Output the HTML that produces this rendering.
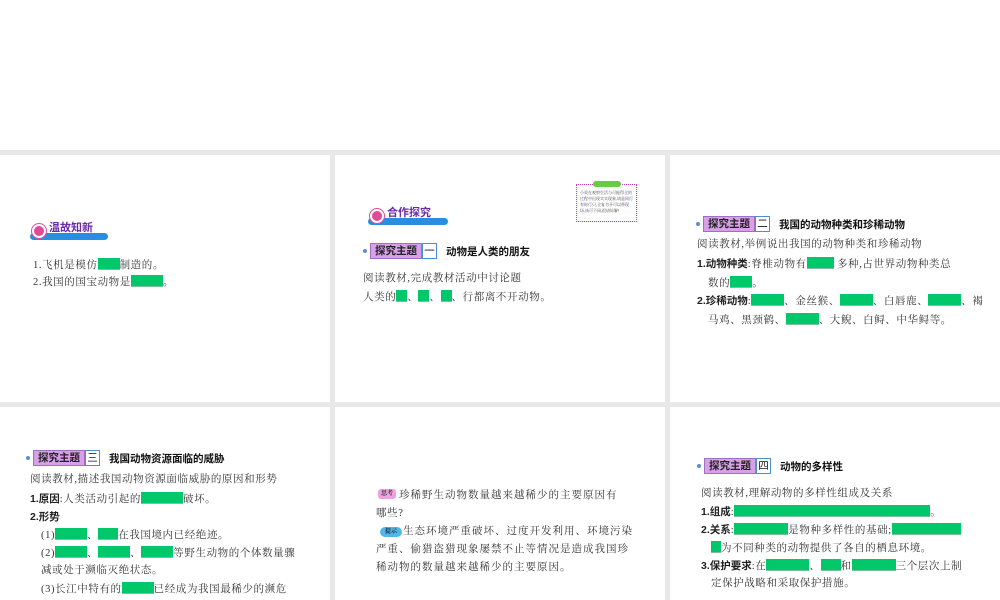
<!DOCTYPE html>
<html><head><meta charset="utf-8"><style>
*{margin:0;padding:0;box-sizing:border-box}
body{width:1000px;height:600px;background:#fff;position:relative;overflow:hidden;font-family:"Liberation Serif","Noto Serif CJK SC",serif;color:#333;font-size:10.5px}
.bg{position:absolute;left:0;top:150px;width:1000px;height:450px;background:#e8e8e8}
.p{position:absolute;background:#fff}
.t{position:absolute;white-space:nowrap;line-height:14px;letter-spacing:0.6px}
.g{display:inline-block;background:#00c86a;height:12px;vertical-align:-2px;border-bottom:1px solid #7fbf9f}
b{font-family:"Liberation Sans","Noto Sans CJK SC",sans-serif;font-weight:bold;color:#222;letter-spacing:0}
.th{position:absolute;height:16px;display:flex;align-items:center;font-family:"Liberation Sans","Noto Sans CJK SC",sans-serif;font-size:10.5px;font-weight:bold;color:#111}
.th .dot{width:4px;height:4px;border-radius:50%;background:#5b8fd0;margin-right:3px}
.th .l{background:#d9a0ea;border:1px solid #a070c0;padding:0 4px;height:16px;line-height:14px;color:#222}
.th .n{border:1px solid #4a90d0;width:15px;height:16px;text-align:center;line-height:14px;font-weight:normal;margin-right:9px;background:#fff}
.bd{position:absolute;height:18px}
.bd .bar{position:absolute;left:0;bottom:0;height:7px;background:#2a8ee0;border-radius:4px}
.bd .c{position:absolute;left:2px;top:2px;width:14px;height:14px;border-radius:50%;background:#e04a9a;border:2px solid #fff;box-shadow:0 0 0 1px #e04a9a}
.bd .tx{position:absolute;left:19px;top:0;font-family:"Liberation Sans","Noto Sans CJK SC",sans-serif;font-weight:bold;color:#6a2aa8;font-size:11px;line-height:13px}
</style></head><body>
<div class="bg"></div>
<div class="p" style="left:0;top:155px;width:330px;height:247px"></div>
<div class="p" style="left:335px;top:155px;width:330px;height:247px"></div>
<div class="p" style="left:670px;top:155px;width:330px;height:247px"></div>
<div class="p" style="left:0;top:407px;width:330px;height:193px"></div>
<div class="p" style="left:335px;top:407px;width:330px;height:193px"></div>
<div class="p" style="left:670px;top:407px;width:330px;height:193px"></div>

<!-- panel1 -->
<div class="bd" style="left:30px;top:222px;width:78px"><div class="bar" style="width:78px"></div><div class="c"></div><div class="tx">温故知新</div></div>
<div class="t" style="left:33px;top:258px">1.飞机是模仿<span class="g" style="width:22px"></span>制造的。</div>
<div class="t" style="left:33px;top:275px">2.我国的国宝动物是<span class="g" style="width:32px"></span>。</div>

<!-- panel2 -->
<div class="bd" style="left:368px;top:207px;width:80px"><div class="bar" style="width:80px"></div><div class="c"></div><div class="tx">合作探究</div></div>
<div style="position:absolute;left:576px;top:184px;width:61px;height:38px;border:1px dotted #c040b0;background:#fff"></div>
<div style="position:absolute;left:593px;top:181px;width:28px;height:6px;background:#60d040;border-radius:3px"></div>
<div style="position:absolute;left:580px;top:190px;width:53px;height:28px;font-size:4px;line-height:6px;color:#444;overflow:hidden">小英在观察生活与可能得全的过程中出现实实现象,请是同行有时行只,全复为矛可以带现场,该可不同,很请谅解!</div>
<div class="th" style="left:363px;top:243px"><span class="dot"></span><span class="l">探究主题</span><span class="n">一</span>动物是人类的朋友</div>
<div class="t" style="left:363px;top:272px">阅读教材,完成教材活动中讨论题</div>
<div class="t" style="left:363px;top:290px">人类的<span class="g" style="width:11px"></span>、<span class="g" style="width:11px"></span>、<span class="g" style="width:11px"></span>、行都离不开动物。</div>

<!-- panel3 -->
<div class="th" style="left:696px;top:216px"><span class="dot"></span><span class="l">探究主题</span><span class="n">二</span>我国的动物种类和珍稀动物</div>
<div class="t" style="left:697px;top:238px">阅读教材,举例说出我国的动物种类和珍稀动物</div>
<div class="t" style="left:697px;top:257px"><b>1.动物种类</b>:脊椎动物有<span class="g" style="width:27px"></span> 多种,占世界动物种类总</div>
<div class="t" style="left:708px;top:276px">数的<span class="g" style="width:22px"></span>。</div>
<div class="t" style="left:697px;top:294px"><b>2.珍稀动物</b>:<span class="g" style="width:33px"></span>、金丝猴、<span class="g" style="width:33px"></span>、白唇鹿、<span class="g" style="width:33px"></span>、褐</div>
<div class="t" style="left:708px;top:313px">马鸡、黑颈鹤、<span class="g" style="width:33px"></span>、大鲵、白鲟、中华鲟等。</div>

<!-- panel4 -->
<div class="th" style="left:26px;top:450px"><span class="dot"></span><span class="l">探究主题</span><span class="n">三</span>我国动物资源面临的威胁</div>
<div class="t" style="left:30px;top:473px">阅读教材,描述我国动物资源面临威胁的原因和形势</div>
<div class="t" style="left:30px;top:492px"><b>1.原因</b>:人类活动引起的<span class="g" style="width:42px"></span>破坏。</div>
<div class="t" style="left:30px;top:510px"><b>2.形势</b></div>
<div class="t" style="left:41px;top:528px">(1)<span class="g" style="width:32px"></span>、<span class="g" style="width:20px"></span>在我国境内已经绝迹。</div>
<div class="t" style="left:41px;top:546px">(2)<span class="g" style="width:32px"></span>、<span class="g" style="width:32px"></span>、<span class="g" style="width:32px"></span>等野生动物的个体数量骤</div>
<div class="t" style="left:41px;top:564px">减或处于濒临灭绝状态。</div>
<div class="t" style="left:41px;top:582px">(3)长江中特有的<span class="g" style="width:32px"></span>已经成为我国最稀少的濒危</div>

<!-- panel5 -->
<div style="position:absolute;left:378px;top:489px;width:18px;height:10px;background:#f0a0e0;border-radius:3px;font-size:6px;line-height:10px;text-align:center;color:#333;font-weight:bold">思考</div>
<div class="t" style="left:399px;top:489px;letter-spacing:1px">珍稀野生动物数量越来越稀少的主要原因有</div>
<div class="t" style="left:376px;top:507px">哪些?</div>
<div style="position:absolute;left:380px;top:527px;width:22px;height:10px;background:#50b8e8;border-radius:5px;font-size:6px;line-height:10px;text-align:center;color:#123;font-weight:bold">提示</div>
<div class="t" style="left:403px;top:525px;letter-spacing:1px">生态环境严重破坏、过度开发利用、环境污染</div>
<div class="t" style="left:376px;top:543px;letter-spacing:1px">严重、偷猎盗猎现象屡禁不止等情况是造成我国珍</div>
<div class="t" style="left:376px;top:561px;letter-spacing:1px">稀动物的数量越来越稀少的主要原因。</div>

<!-- panel6 -->
<div class="th" style="left:697px;top:458px"><span class="dot"></span><span class="l">探究主题</span><span class="n">四</span>动物的多样性</div>
<div class="t" style="left:701px;top:487px">阅读教材,理解动物的多样性组成及关系</div>
<div class="t" style="left:701px;top:505px"><b>1.组成</b>:<span class="g" style="width:196px"></span>。</div>
<div class="t" style="left:701px;top:523px"><b>2.关系</b>:<span class="g" style="width:54px"></span>是物种多样性的基础;<span class="g" style="width:69px"></span></div>
<div class="t" style="left:711px;top:541px"><span class="g" style="width:10px"></span>为不同种类的动物提供了各自的栖息环境。</div>
<div class="t" style="left:701px;top:559px"><b>3.保护要求</b>:在<span class="g" style="width:43px"></span>、<span class="g" style="width:20px"></span>和<span class="g" style="width:44px"></span>三个层次上制</div>
<div class="t" style="left:711px;top:577px">定保护战略和采取保护措施。</div>
</body></html>
